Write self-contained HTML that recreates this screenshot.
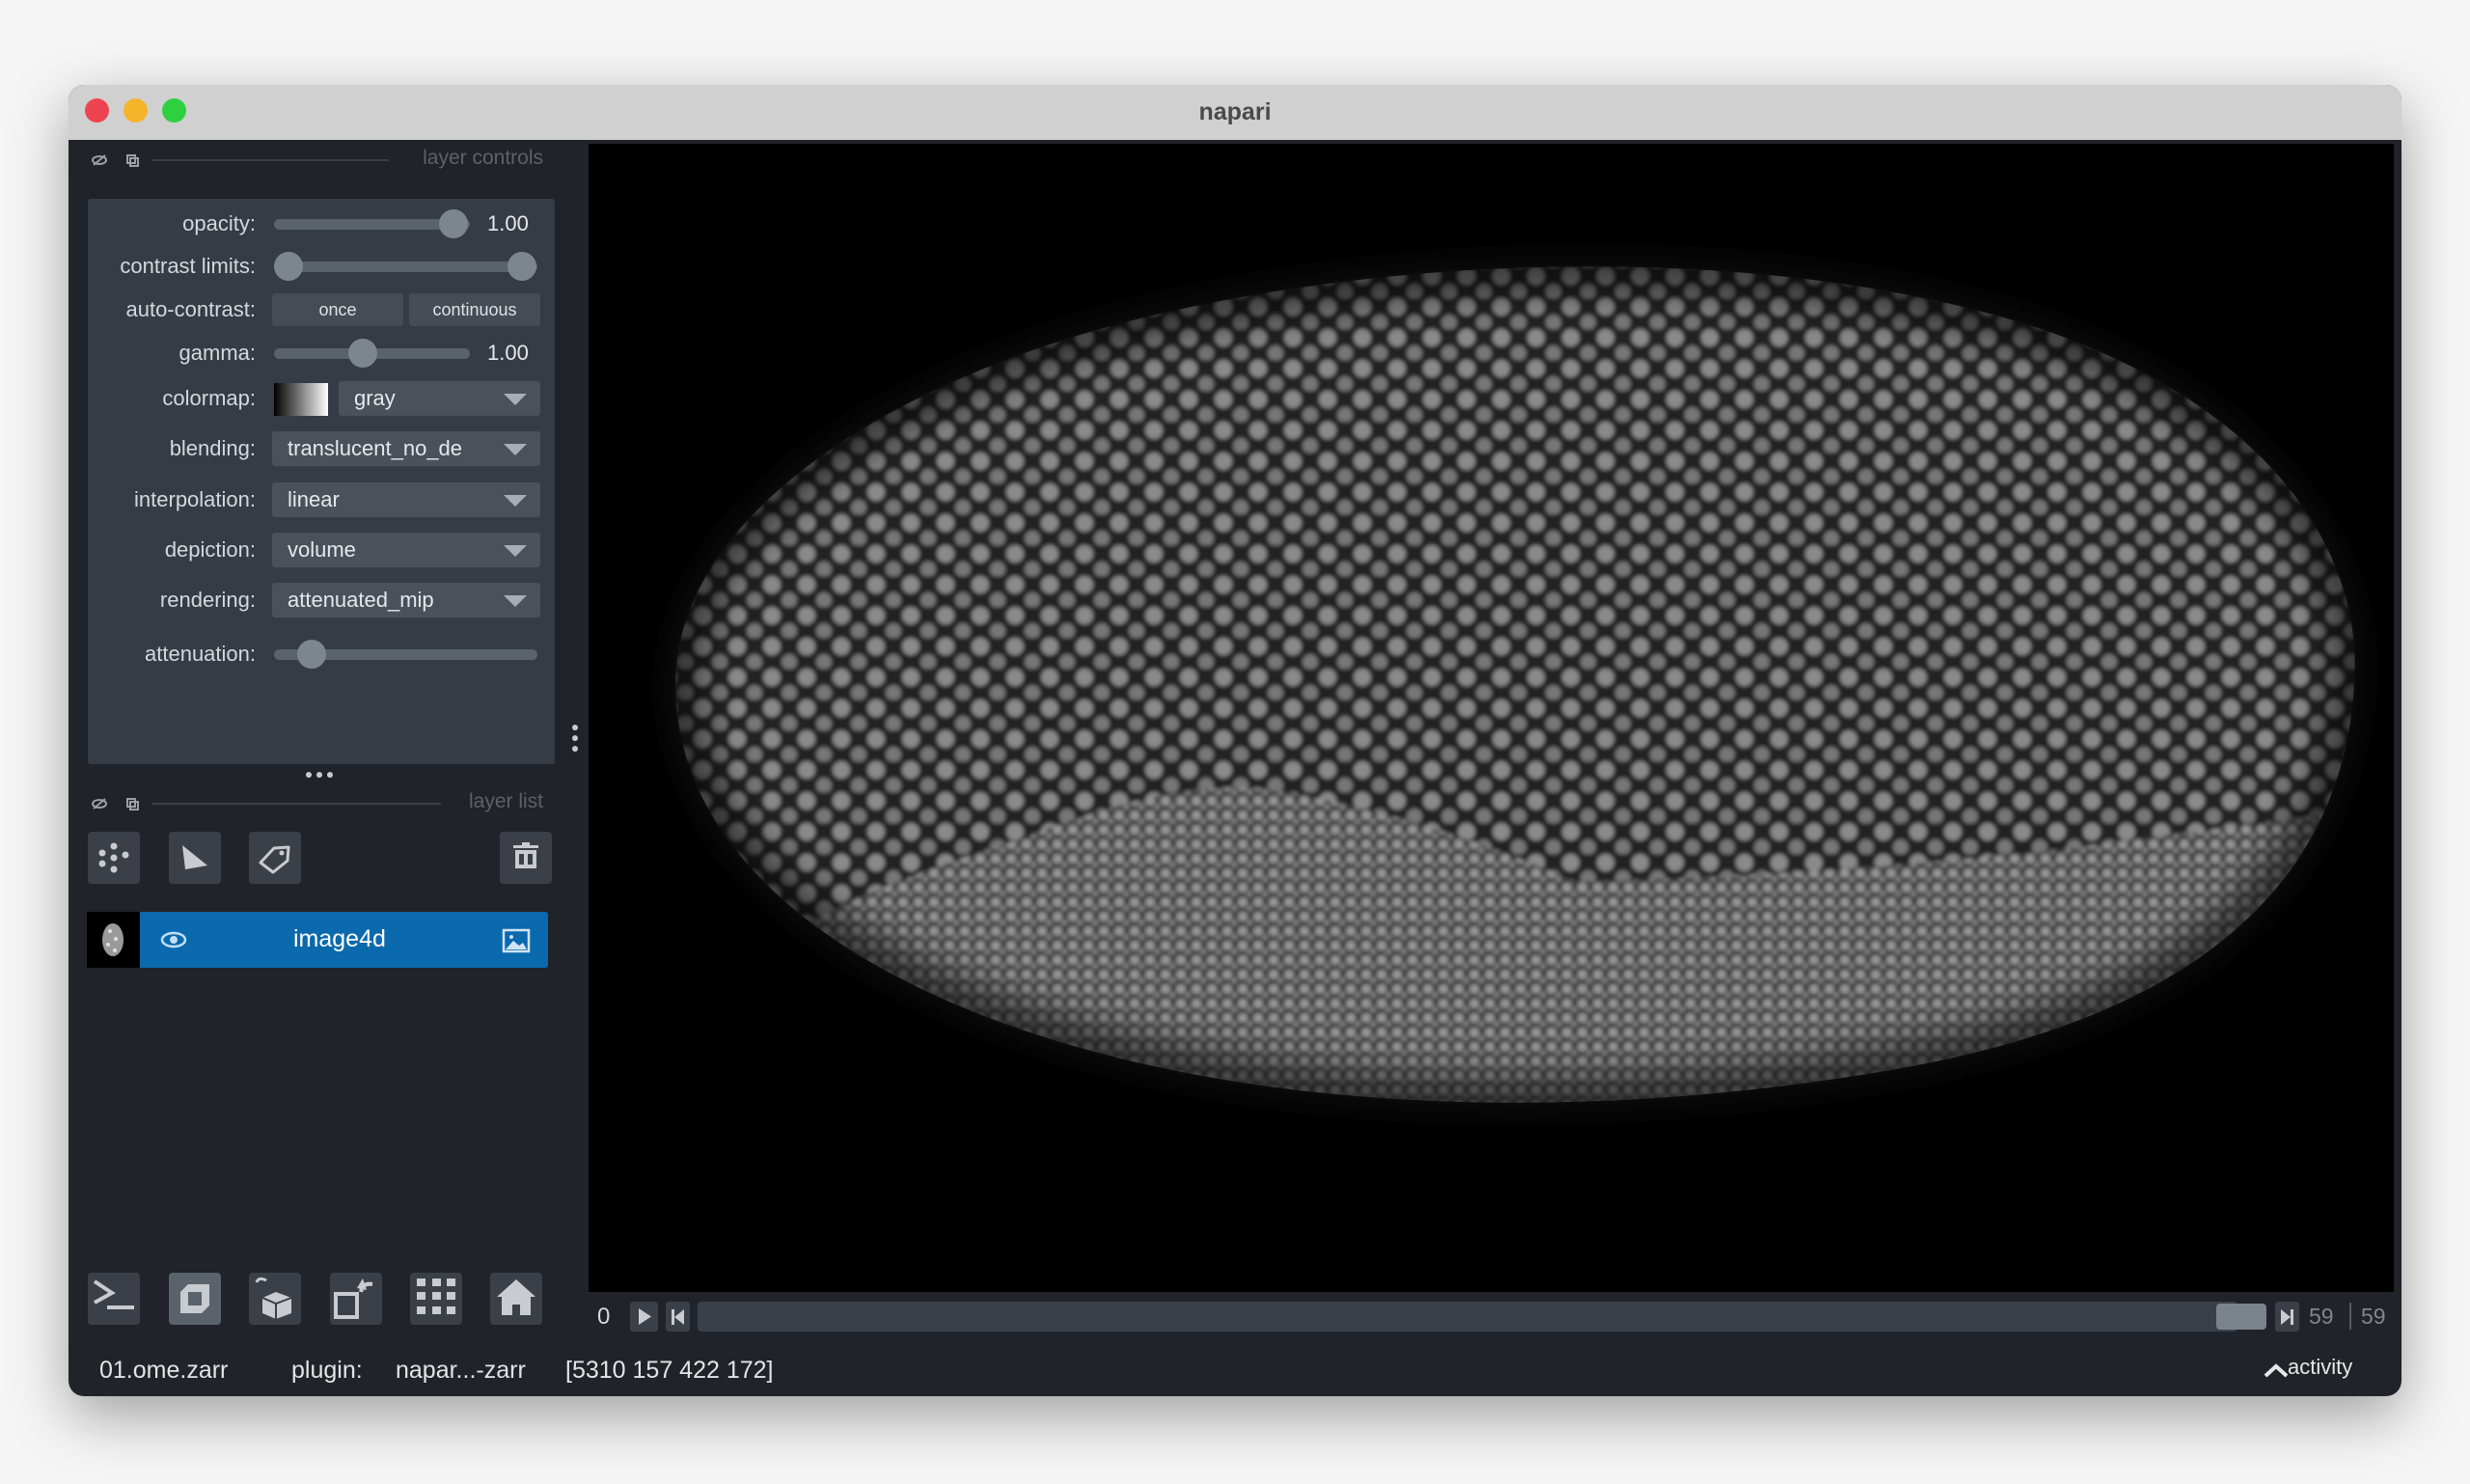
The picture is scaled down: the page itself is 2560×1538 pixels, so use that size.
<!DOCTYPE html>
<html><head><meta charset="utf-8"><style>
*{box-sizing:border-box;margin:0;padding:0}
body{width:2560px;height:1538px;background:#f5f5f5;position:relative;overflow:hidden;font-family:"Liberation Sans",sans-serif}
.win{position:absolute;left:71px;top:88px;width:2418px;height:1359px;border-radius:16px;background:#202329;overflow:hidden;box-shadow:0 20px 60px rgba(0,0,0,.35)}
.title{position:absolute;left:0;top:0;width:100%;height:57px;background:#d0d0d0;text-align:center;line-height:57px;font-size:25px;font-weight:bold;color:#4a4a4a}
.tl{position:absolute;top:14px;width:25px;height:25px;border-radius:50%}
.a{position:absolute}
.lbl{position:absolute;right:2224px;font-size:22px;color:#d5d8dc;text-align:right;white-space:nowrap}
.trk{position:absolute;height:11px;border-radius:6px;background:#5a626c}
.hd{position:absolute;width:30px;height:30px;border-radius:50%;background:#7d868f}
.cb{position:absolute;height:36px;background:#4a515b;border-radius:3px;font-size:22px;color:#e6e8ea;line-height:36px;padding-left:16px;overflow:hidden;white-space:nowrap}
.cb:after{content:"";position:absolute;right:14px;top:13px;border-left:12px solid transparent;border-right:12px solid transparent;border-top:12px solid #a7adb3}
.btn{position:absolute;width:54px;height:54px;background:#3b4048;border-radius:4px}
.val{position:absolute;font-size:22px;color:#e6e8ea}
.st{position:absolute;top:1318px;font-size:25px;color:#e4e4e4}
.hdr{position:absolute;right:1926px;font-size:21px;color:#5c6168;white-space:nowrap}
</style></head><body>
<div class="win">
<div class="title">napari</div>
<div class="tl" style="left:17px;background:#ee4450"></div>
<div class="tl" style="left:57px;background:#f5b42a"></div>
<div class="tl" style="left:97px;background:#2ed040"></div>

<svg class="a" style="left:24px;top:70px" width="60" height="16"><g fill="none" stroke="#9aa0a6" stroke-width="2"><ellipse cx="8" cy="8" rx="7" ry="4"/><line x1="2" y1="13" x2="14" y2="3"/><rect x="37" y="3" width="8" height="8"/><rect x="40" y="6" width="8" height="8"/></g></svg>
<div class="a" style="left:86px;top:77px;width:246px;height:2px;background:#3a3f46"></div>
<div class="hdr" style="top:64px">layer controls</div>

<div class="a" style="left:20px;top:118px;width:484px;height:586px;background:#363c45;border-radius:3px"></div>
<div class="lbl" style="top:131px">opacity:</div>
<div class="trk" style="left:213px;top:139px;width:203px"></div><div class="hd" style="left:384px;top:129px"></div>
<div class="val" style="left:434px;top:131px">1.00</div>
<div class="lbl" style="top:175px">contrast limits:</div>
<div class="trk" style="left:213px;top:183px;width:273px"></div><div class="hd" style="left:213px;top:173px"></div><div class="hd" style="left:455px;top:173px"></div>
<div class="lbl" style="top:220px">auto-contrast:</div>
<div class="a" style="left:211px;top:216px;width:136px;height:34px;background:#454c55;border-radius:3px;color:#e0e2e4;font-size:18px;text-align:center;line-height:34px">once</div>
<div class="a" style="left:353px;top:216px;width:136px;height:34px;background:#454c55;border-radius:3px;color:#e0e2e4;font-size:18px;text-align:center;line-height:34px">continuous</div>
<div class="lbl" style="top:265px">gamma:</div>
<div class="trk" style="left:213px;top:273px;width:203px"></div><div class="hd" style="left:290px;top:263px"></div>
<div class="val" style="left:434px;top:265px">1.00</div>
<div class="lbl" style="top:312px">colormap:</div>
<div class="a" style="left:213px;top:309px;width:56px;height:34px;background:linear-gradient(90deg,#000,#fff)"></div>
<div class="cb" style="left:280px;top:307px;width:209px">gray</div>
<div class="lbl" style="top:364px">blending:</div>
<div class="cb" style="left:211px;top:359px;width:278px">translucent_no_de</div>
<div class="lbl" style="top:417px">interpolation:</div>
<div class="cb" style="left:211px;top:412px;width:278px">linear</div>
<div class="lbl" style="top:469px">depiction:</div>
<div class="cb" style="left:211px;top:464px;width:278px">volume</div>
<div class="lbl" style="top:521px">rendering:</div>
<div class="cb" style="left:211px;top:516px;width:278px">attenuated_mip</div>
<div class="lbl" style="top:577px">attenuation:</div>
<div class="trk" style="left:213px;top:585px;width:273px"></div><div class="hd" style="left:237px;top:575px"></div>

<svg class="a" style="left:245px;top:711px" width="30" height="8"><g fill="#c8ccd0"><circle cx="4" cy="4" r="3"/><circle cx="15" cy="4" r="3"/><circle cx="26" cy="4" r="3"/></g></svg>
<svg class="a" style="left:521px;top:662px" width="8" height="30"><g fill="#c8ccd0"><circle cx="4" cy="4" r="3"/><circle cx="4" cy="15" r="3"/><circle cx="4" cy="26" r="3"/></g></svg>

<svg class="a" style="left:24px;top:737px" width="60" height="16"><g fill="none" stroke="#9aa0a6" stroke-width="2"><ellipse cx="8" cy="8" rx="7" ry="4"/><line x1="2" y1="13" x2="14" y2="3"/><rect x="37" y="3" width="8" height="8"/><rect x="40" y="6" width="8" height="8"/></g></svg>
<div class="a" style="left:86px;top:744px;width:300px;height:2px;background:#3a3f46"></div>
<div class="hdr" style="top:731px">layer list</div>

<div class="btn" style="left:20px;top:774px"><svg width="54" height="54"><g fill="#c8ccd0"><circle cx="27" cy="15" r="3.5"/><circle cx="15" cy="22" r="3.5"/><circle cx="39" cy="24" r="3.5"/><circle cx="27" cy="27" r="3.5"/><circle cx="15" cy="33" r="3.5"/><circle cx="27" cy="39" r="3.5"/></g></svg></div>
<div class="btn" style="left:104px;top:774px"><svg width="54" height="54"><polygon points="14,14 40,35 17,39" fill="#c8ccd0"/></svg></div>
<div class="btn" style="left:187px;top:774px"><svg width="54" height="54"><path d="M12 32 L26 17 L41 16 L40 30 L25 42 Z" fill="none" stroke="#c8ccd0" stroke-width="3" stroke-linejoin="round"/><circle cx="34" cy="22" r="2.5" fill="#c8ccd0"/></svg></div>
<div class="btn" style="left:447px;top:774px"><svg width="54" height="54"><g fill="#c8ccd0"><rect x="14" y="14" width="26" height="3"/><rect x="23" y="11" width="8" height="3"/><path d="M16 19h22v19H16zM20 23v11h5V23zM29 23v11h5V23z" fill-rule="evenodd"/></g></svg></div>

<div class="a" style="left:19px;top:857px;width:55px;height:58px;background:#000"><svg width="55" height="58"><ellipse cx="27" cy="29" rx="11" ry="17" fill="#9a9a9a"/><g fill="#fff" opacity=".7"><circle cx="24" cy="20" r="2"/><circle cx="30" cy="28" r="2"/><circle cx="22" cy="34" r="2"/><circle cx="29" cy="40" r="2"/></g></svg></div>
<div class="a" style="left:74px;top:857px;width:423px;height:58px;background:#0b69ad;border-radius:0 3px 3px 0"></div>
<svg class="a" style="left:94px;top:874px" width="30" height="24"><ellipse cx="15" cy="12" rx="12" ry="7" fill="none" stroke="#bfe0f5" stroke-width="2.5"/><circle cx="15" cy="12" r="4" fill="#bfe0f5"/></svg>
<div class="a" style="left:233px;top:871px;font-size:25px;color:#fff">image4d</div>
<svg class="a" style="left:449px;top:874px" width="30" height="26"><rect x="2" y="2" width="26" height="22" fill="none" stroke="#cfe4f3" stroke-width="2.5"/><polygon points="4,22 12,13 18,18 22,15 26,22" fill="#cfe4f3"/><circle cx="10" cy="9" r="2" fill="#cfe4f3"/></svg>

<div class="btn" style="left:20px;top:1231px"><svg width="54" height="54"><path d="M7 9 L25 21 L7 31" fill="none" stroke="#c8ccd0" stroke-width="4"/><rect x="20" y="34" width="28" height="4" fill="#c8ccd0"/></svg></div>
<div class="btn" style="left:104px;top:1231px;background:#5a626c"><svg width="54" height="54"><path d="M12 20 L20 12 H42 V34 L34 42 H12 Z M20 20 H34 V34 H20 Z" fill="#c8ccd0" fill-rule="evenodd"/></svg></div>
<div class="btn" style="left:187px;top:1231px"><svg width="54" height="54"><path d="M28 20 L44 26 V42 L28 48 L14 42 V26 Z" fill="#c8ccd0"/><path d="M14 26 L28 32 L44 26 M28 32 V48" stroke="#3b4048" stroke-width="2" fill="none"/><path d="M8 10 Q10 4 18 8" stroke="#c8ccd0" stroke-width="3" fill="none"/></svg></div>
<div class="btn" style="left:271px;top:1231px"><svg width="54" height="54"><rect x="6" y="22" width="22" height="24" fill="none" stroke="#c8ccd0" stroke-width="4"/><path d="M32 20 Q34 10 44 12" stroke="#c8ccd0" stroke-width="4" fill="none"/><polygon points="34,6 38,18 28,16" fill="#c8ccd0"/></svg></div>
<div class="btn" style="left:354px;top:1231px"><svg width="54" height="54"><g fill="#c8ccd0"><rect x="7" y="6" width="9" height="8"/><rect x="23" y="6" width="9" height="8"/><rect x="38" y="6" width="9" height="8"/><rect x="7" y="20" width="9" height="8"/><rect x="23" y="20" width="9" height="8"/><rect x="38" y="20" width="9" height="8"/><rect x="7" y="35" width="9" height="8"/><rect x="23" y="35" width="9" height="8"/><rect x="38" y="35" width="9" height="8"/></g></svg></div>
<div class="btn" style="left:437px;top:1231px"><svg width="54" height="54"><path d="M27 7 L47 25 H42 V44 H31 V33 H23 V44 H12 V25 H7 Z" fill="#c8ccd0"/></svg></div>

<!-- canvas -->
<div class="a" style="left:539px;top:61px;width:1871px;height:1190px;background:#000;overflow:hidden">
<svg width="1871" height="1190">
<defs>
<pattern id="p1" width="36" height="32" patternUnits="userSpaceOnUse"><circle cx="10" cy="9" r="9" fill="#d0d0d0"/><circle cx="28" cy="25" r="8" fill="#b0b0b0"/></pattern>
<pattern id="p2" width="16" height="15" patternUnits="userSpaceOnUse"><circle cx="6" cy="6" r="5" fill="#a8a8a8"/><circle cx="14" cy="13" r="4" fill="#909090"/></pattern>
<filter id="b1"><feGaussianBlur stdDeviation="18"/></filter>
<filter id="b2"><feGaussianBlur stdDeviation="2"/></filter>
<clipPath id="c1"><path d="M90 560 C90 380 330 230 620 170 C900 110 1250 110 1500 190 C1740 270 1840 420 1830 560 C1820 740 1700 900 1350 960 C1000 1020 650 1000 400 900 C200 820 90 700 90 560 Z"/></clipPath>
</defs>
<path d="M90 560 C90 380 330 230 620 170 C900 110 1250 110 1500 190 C1740 270 1840 420 1830 560 C1820 740 1700 900 1350 960 C1000 1020 650 1000 400 900 C200 820 90 700 90 560 Z" fill="#2a2a2a" filter="url(#b1)"/>
<g clip-path="url(#c1)" filter="url(#b2)">
<rect x="0" y="0" width="1871" height="1190" fill="#222"/>
<rect x="0" y="0" width="1871" height="1190" fill="url(#p1)" opacity=".6"/>
<path d="M200 820 Q304 765 450 720 Q600 660 696 668 Q850 690 1023 765 Q1250 760 1513 733 Q1650 715 1840 690 L1840 1100 L200 1100 Z" fill="#3c3c3c"/>
<path d="M200 820 Q304 765 450 720 Q600 660 696 668 Q850 690 1023 765 Q1250 760 1513 733 Q1650 715 1840 690 L1840 1100 L200 1100 Z" fill="url(#p2)" opacity=".85"/>
</g>
<path d="M90 560 C90 380 330 230 620 170 C900 110 1250 110 1500 190 C1740 270 1840 420 1830 560 C1820 740 1700 900 1350 960 C1000 1020 650 1000 400 900 C200 820 90 700 90 560 Z" fill="none" stroke="#000" stroke-width="50" filter="url(#b1)" opacity=".6"/>
</svg>
</div>

<div class="a" style="left:548px;top:1263px;font-size:24px;color:#d8d8d8">0</div>
<div class="a" style="left:582px;top:1261px;width:29px;height:31px;background:#3b4048;border-radius:3px"><svg width="29" height="31"><polygon points="9,7 22,15.5 9,24" fill="#c8ccd0"/></svg></div>
<div class="a" style="left:619px;top:1261px;width:25px;height:31px;background:#3b4048;border-radius:3px"><svg width="25" height="31"><rect x="6" y="8" width="3" height="16" fill="#c8ccd0"/><polygon points="19,8 9,16 19,24" fill="#c8ccd0"/></svg></div>
<div class="a" style="left:652px;top:1261px;width:1596px;height:31px;background:#3a4049;border-radius:4px"></div>
<div class="a" style="left:2226px;top:1263px;width:52px;height:27px;background:#7a838c;border-radius:4px"></div>
<div class="a" style="left:2287px;top:1261px;width:25px;height:31px;background:#3b4048;border-radius:3px"><svg width="25" height="31"><polygon points="6,8 16,16 6,24" fill="#c8ccd0"/><rect x="16" y="8" width="3" height="16" fill="#c8ccd0"/></svg></div>
<div class="a" style="left:2322px;top:1263px;font-size:23px;color:#80868d">59</div>
<div class="a" style="left:2364px;top:1262px;width:2px;height:28px;background:#555b62"></div>
<div class="a" style="left:2376px;top:1263px;font-size:23px;color:#80868d">59</div>

<div class="st" style="left:32px">01.ome.zarr</div>
<div class="st" style="left:231px">plugin:</div>
<div class="st" style="left:339px">napar...-zarr</div>
<div class="st" style="left:515px">[5310 157 422 172]</div>
<svg class="a" style="left:2274px;top:1323px" width="28" height="18"><path d="M3 15 L14 5 L25 15" fill="none" stroke="#e8e8e8" stroke-width="4"/></svg>
<div class="a" style="left:2300px;top:1316px;font-size:22px;color:#e8e8e8">activity</div>
</div>
</body></html>
